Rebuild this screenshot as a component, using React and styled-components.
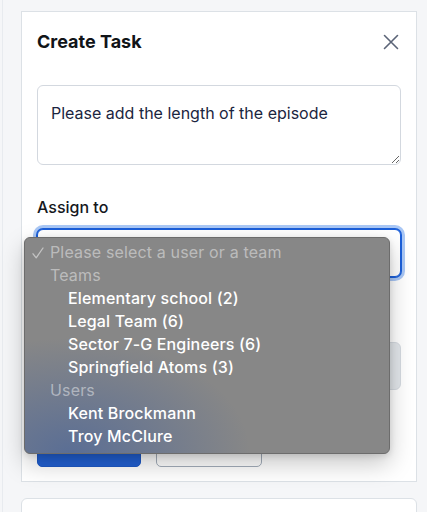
import React from 'react'
import styled, { createGlobalStyle } from 'styled-components'

const GlobalStyle = createGlobalStyle`
    * { box-sizing: border-box; }
    body {
        margin: 0;
        background: #f5f6f8;
        font-family: Inter, "Noto Sans", sans-serif;
        -webkit-font-smoothing: antialiased;
    }
`

const Page = styled.div`
    min-height: 100vh;
    margin-left: 2px;
    border-left: 1px solid #e8ebef;
    padding: 11px 10px 0 18px;
    display: flex;
    flex-direction: column;
    gap: 16px;
`

const Card = styled.section`
    background: #fff;
    border: 1px solid #dce1e6;
    border-radius: ${p => (p.$rounded ? '6px' : '0')};
    padding: 18px 15px 14px;
    display: flex;
    flex-direction: column;
    min-height: ${p => p.$minHeight || 'auto'};
`

const Header = styled.div`
    display: flex;
    justify-content: space-between;
    align-items: center;
    height: 24px;
`

const Title = styled.h2`
    margin: 0;
    font-size: 18px;
    line-height: 24px;
    font-weight: 700;
    color: #111418;
`

const CloseButton = styled.button`
    width: 20px;
    height: 20px;
    padding: 0;
    border: 0;
    background: none;
    display: flex;
    align-items: center;
    justify-content: center;
    cursor: pointer;
`

const TextArea = styled.textarea`
    margin-top: 31px;
    width: 100%;
    height: 80px;
    border: 1px solid #d3d8df;
    border-radius: 6px;
    padding: 15px 13px;
    font-family: inherit;
    font-size: 16px;
    line-height: 24px;
    color: #1b2540;
    resize: vertical;
    outline: none;
`

const Field = styled.div`
    position: relative;
    margin-top: ${p => p.$gap || '30px'};
`

const Label = styled.label`
    display: block;
    font-size: 16px;
    line-height: 24px;
    font-weight: 500;
    color: #15181d;
`

const Control = styled.div`
    margin-top: 10px;
    height: 48px;
    border-radius: 6px;
    padding: 0 13px;
    display: flex;
    align-items: center;
    font-size: 16px;
    color: #6b7280;
    background: ${p => (p.$disabled ? '#e2e6ea' : '#fff')};
    border: 1px solid ${p => (p.$focused ? '#1b5fd9' : '#d5dae0')};
    box-shadow: ${p => (p.$focused ? '0 0 0 1px #1b5fd9, 0 0 0 4px #a9c7f5' : 'none')};
`

const Actions = styled.div`
    margin-top: 29px;
    display: flex;
    gap: 15px;
`

const Button = styled.button`
    height: 48px;
    width: ${p => p.$width};
    border-radius: 5px;
    font-family: inherit;
    font-size: 15px;
    font-weight: 500;
    cursor: pointer;
    background: ${p => (p.$primary ? '#2160d2' : '#fff')};
    color: ${p => (p.$primary ? '#fff' : '#374151')};
    border: 1px solid ${p => (p.$primary ? '#1d58c4' : '#a3adba')};
`

const Menu = styled.div`
    position: absolute;
    z-index: 10;
    top: 42px;
    left: -13px;
    width: 366px;
    padding: 3px 0 5px;
    border: 1px solid #6c6c6c;
    border-radius: 6px;
    background:
        radial-gradient(ellipse 180px 115px at 45px 100%, rgba(58, 92, 158, 0.58), rgba(58, 92, 158, 0)),
        #878787;
    box-shadow: 0 10px 24px rgba(0, 0, 0, 0.22), 0 2px 6px rgba(0, 0, 0, 0.12);
`

const MenuRow = styled.div`
    position: relative;
    height: 23px;
    line-height: 23px;
    font-size: 16px;
    letter-spacing: 0.15px;
    white-space: nowrap;
    padding-left: ${p => (p.$indent ? '43px' : '25px')};
    font-weight: ${p => (p.$muted ? 400 : 500)};
    color: ${p => (p.$muted ? 'rgba(255, 255, 255, 0.45)' : '#fff')};
`

const Check = styled.svg`
    position: absolute;
    left: 7px;
    top: 6px;
`

const teams = ['Elementary school (2)', 'Legal Team (6)', 'Sector 7-G Engineers (6)', 'Springfield Atoms (3)']
const users = ['Kent Brockmann', 'Troy McClure']

function App() {
    return (
        <>
            <GlobalStyle />
            <Page>
                <Card>
                    <Header>
                        <Title>Create Task</Title>
                        <CloseButton aria-label="Close">
                            <svg width="20" height="20" viewBox="0 0 20 20" fill="none">
                                <path d="M3.5 3.5l13 13M16.5 3.5l-13 13" stroke="#5b6477" strokeWidth="1.6" strokeLinecap="round" />
                            </svg>
                        </CloseButton>
                    </Header>

                    <TextArea defaultValue="Please add the length of the episode" />

                    <Field>
                        <Label>Assign to</Label>
                        <Control $focused>Please select a user or a team</Control>

                        <Menu>
                            <MenuRow $muted>
                                <Check width="12" height="12" viewBox="0 0 12 12" fill="none">
                                    <path d="M1 6.8l3.2 4L11 1" stroke="rgba(255,255,255,0.5)" strokeWidth="1.3" strokeLinecap="round" strokeLinejoin="round" />
                                </Check>
                                Please select a user or a team
                            </MenuRow>
                            <MenuRow $muted>Teams</MenuRow>
                            {teams.map(t => (
                                <MenuRow key={t} $indent>{t}</MenuRow>
                            ))}
                            <MenuRow $muted>Users</MenuRow>
                            {users.map(u => (
                                <MenuRow key={u} $indent>{u}</MenuRow>
                            ))}
                        </Menu>
                    </Field>

                    <Field $gap="31px">
                        <Label>Due date</Label>
                        <Control $disabled />
                    </Field>

                    <Actions>
                        <Button $primary $width="104px">Create</Button>
                        <Button $width="106px">Cancel</Button>
                    </Actions>
                </Card>

                <Card $rounded $minHeight="80px" />
            </Page>
        </>
    )
}

export default App
